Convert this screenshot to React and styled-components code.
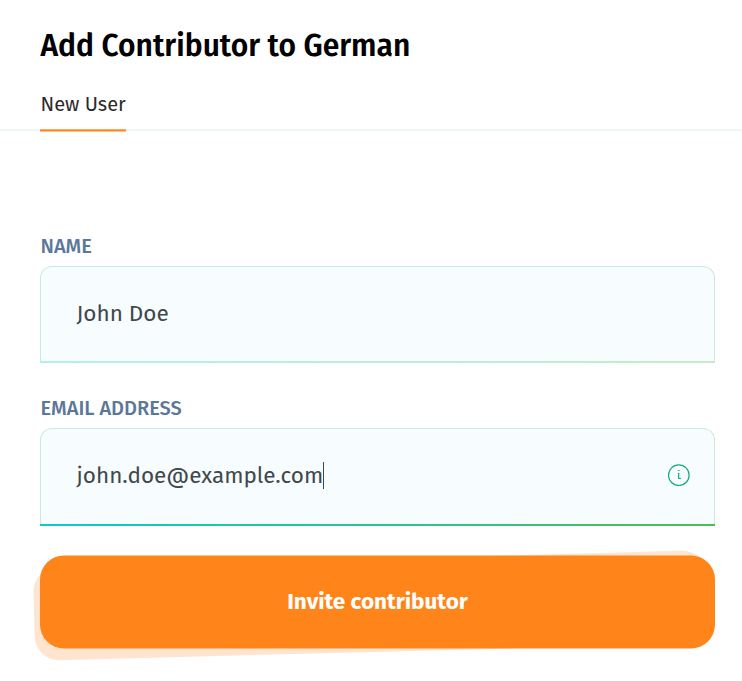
import React from "react";
import styled, { createGlobalStyle } from "styled-components";

const GlobalStyle = createGlobalStyle`
  * { box-sizing: border-box; }
  body { margin: 0; background: #fff; font-family: "Fira Sans", "Noto Sans", sans-serif; }
`;

const Dialog = styled.main`
  height: 681px;
  overflow: hidden;
`;

const Title = styled.h1`
  margin: 0;
  padding: 26px 40px 0 40.5px;
  height: 84px;
  font-size: 30px;
  line-height: 40px;
  font-weight: 600;
  letter-spacing: 0.02px;
  color: #000;
  white-space: nowrap;
`;

const Tabs = styled.nav`
  display: flex;
  height: 48px;
  padding-left: 40px;
  background: linear-gradient(#edf5f8, #edf5f8) 0 45px / 100% 2px no-repeat;
`;

const Tab = styled.button`
  width: 85.5px;
  padding: 0 0 8px 0.5px;
  border: 0;
  background: linear-gradient(#ffa85c 0 1px, #ff8419 1px 2px, #ffc490 2px 3px) 0 100% / 100% 3px no-repeat;
  text-align: left;
  font: 400 20px/26px "Fira Sans", "Noto Sans", sans-serif;
  color: #2a2a2a;
  white-space: nowrap;
`;

const Form = styled.form`
  display: flex;
  flex-direction: column;
  padding: 101px 27px 0 40px;
`;

const Field = styled.div`
  height: 162px;
`;

const Label = styled.label`
  display: block;
  height: 33px;
  padding-left: 0.5px;
  font-size: 20px;
  line-height: 26px;
  font-weight: 500;
  color: #5b7899;
`;

const InputBox = styled.div`
  display: flex;
  align-items: center;
  justify-content: space-between;
  height: 97px;
  padding: 0 24px 3px 35.5px;
  border: 1px solid #c9eae0;
  border-bottom: 0;
  border-radius: 12px 12px 0 0;
  background: #f7fcff;
  position: relative;

  &::after {
    content: "";
    position: absolute;
    left: -1px;
    right: -1px;
    bottom: ${({ $focused }) => ($focused ? "-0.5px" : "0")};
    height: 2px;
    background: ${({ $focused }) =>
      $focused
        ? "linear-gradient(90deg, #08cdc9, #4fbd55)"
        : "linear-gradient(90deg, #b2f0ec, #c5ebca)"};
  }
`;

const Value = styled.div`
  display: flex;
  align-items: center;
  font-size: 22.5px;
  line-height: 30px;
  color: #40484b;
  white-space: nowrap;
`;

const Caret = styled.span`
  width: 1px;
  height: 27px;
  background: #40484b;
`;

const Icon = styled.svg`
  margin-bottom: 1px;
`;

const InfoIcon = () => (
  <Icon width="22" height="22" viewBox="0 0 22 22" fill="none" stroke="#13aa7b">
    <circle cx="10.8" cy="11.2" r="10.3" strokeWidth="1.2" />
    <path d="M10.7 9v5.5h2.3M9.9 9.4h.8" strokeWidth="1.2" />
    <path d="M10.2 6.5h1.4" strokeWidth="1" />
  </Icon>
);

const Submit = styled.button`
  position: relative;
  isolation: isolate;
  height: 93px;
  margin-top: -1.5px;
  padding: 0;
  border: 0;
  border-radius: 24px;
  background: transparent;
  color: #fff;
  font: 700 22.5px/30px "Fira Sans", "Noto Sans", sans-serif;

  &::before {
    content: "";
    position: absolute;
    z-index: -2;
    inset: 3px 7px -3px -6px;
    border-radius: 24px;
    background: #ffe5d0;
    transform: rotate(-1.5deg);
  }

  &::after {
    content: "";
    position: absolute;
    z-index: -1;
    inset: 0;
    border-radius: 24px;
    background: #ff8419;
    transform: translateY(-0.5px);
  }
`;

export default function App() {
  return (
    <Dialog>
      <GlobalStyle />
      <Title>Add Contributor to German</Title>
      <Tabs><Tab type="button">New User</Tab></Tabs>
      <Form>
        <Field>
          <Label>NAME</Label>
          <InputBox><Value>John Doe</Value></InputBox>
        </Field>
        <Field>
          <Label>EMAIL ADDRESS</Label>
          <InputBox $focused>
            <Value>john.doe@example.com<Caret /></Value>
            <InfoIcon />
          </InputBox>
        </Field>
        <Submit type="button">Invite contributor</Submit>
      </Form>
    </Dialog>
  );
}
